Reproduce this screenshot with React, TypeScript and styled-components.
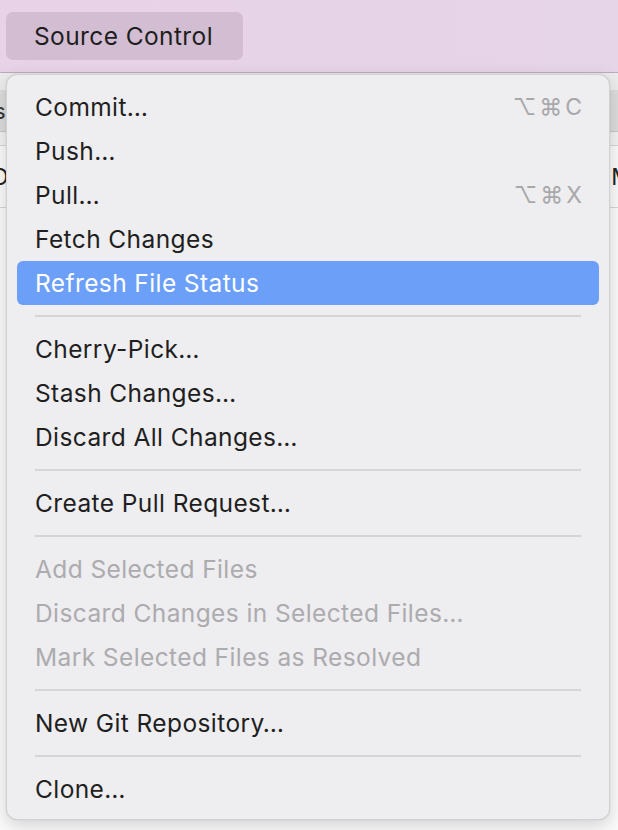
import React from 'react'
import styled, { createGlobalStyle } from 'styled-components'

type Entry =
  | { kind: 'item'; label: string; shortcut?: string; disabled?: boolean; active?: boolean }
  | { kind: 'sep' }

const entries: Entry[] = [
  { kind: 'item', label: 'Commit…', shortcut: '⌥⌘C' },
  { kind: 'item', label: 'Push…' },
  { kind: 'item', label: 'Pull…', shortcut: '⌥⌘X' },
  { kind: 'item', label: 'Fetch Changes' },
  { kind: 'item', label: 'Refresh File Status', active: true },
  { kind: 'sep' },
  { kind: 'item', label: 'Cherry-Pick…' },
  { kind: 'item', label: 'Stash Changes…' },
  { kind: 'item', label: 'Discard All Changes…' },
  { kind: 'sep' },
  { kind: 'item', label: 'Create Pull Request…' },
  { kind: 'sep' },
  { kind: 'item', label: 'Add Selected Files', disabled: true },
  { kind: 'item', label: 'Discard Changes in Selected Files…', disabled: true },
  { kind: 'item', label: 'Mark Selected Files as Resolved', disabled: true },
  { kind: 'sep' },
  { kind: 'item', label: 'New Git Repository…' },
  { kind: 'sep' },
  { kind: 'item', label: 'Clone…' },
]

const App: React.FC = () => {
  return (
    <Page>
      <GlobalStyle />
      <TopBar>
        <BarButton>Source Control</BarButton>
      </TopBar>
      <Window>
        <Toolbar />
        <TabRow>
          <span>s</span>
        </TabRow>
        <Spacer />
        <ListRow>
          <span>D</span>
          <span>M</span>
        </ListRow>
      </Window>

      <Menu>
        {entries.map((entry, index) =>
          entry.kind === 'sep' ? (
            <Separator key={index} />
          ) : (
            <Item key={index} $active={entry.active} $disabled={entry.disabled}>
              <span>{entry.label}</span>
              {entry.shortcut && <Shortcut>{entry.shortcut}</Shortcut>}
            </Item>
          ),
        )}
      </Menu>
    </Page>
  )
}

const GlobalStyle = createGlobalStyle`
  html, body {
    margin: 0;
    padding: 0;
    background: #ffffff;
  }
  * {
    box-sizing: border-box;
  }
`

const Page = styled.div`
  position: relative;
  width: 618px;
  height: 830px;
  overflow: hidden;
  font-family: 'Inter', 'Liberation Sans', sans-serif;
  background: #fbfbfb;
`

const TopBar = styled.div`
  height: 73px;
  padding: 12px 6px 0;
  background: linear-gradient(90deg, #e8d2e8 0%, #e6d4e8 100%);
  border-bottom: 1px solid #b9adb9;
`

const BarButton = styled.div`
  display: inline-flex;
  align-items: center;
  width: 237px;
  height: 48px;
  padding-left: 28px;
  padding-bottom: 1px;
  border-radius: 7px;
  background: #d2bdd2;
  color: #1e1e1e;
  font-size: 24.5px;
  letter-spacing: 0.4px;
`

const Window = styled.div`
  display: flex;
  flex-direction: column;
`

const Toolbar = styled.div`
  height: 17px;
  background: #ececec;
`

const TabRow = styled.div`
  height: 42px;
  background: #dcdcdc;
  border-bottom: 1px solid #c8c8c8;
  display: flex;
  align-items: center;
  color: #333;
  font-size: 22px;
  span {
    margin-left: -6px;
  }
`

const Spacer = styled.div`
  height: 14px;
  background: #f2f2f2;
  border-bottom: 1px solid #d6d6d6;
`

const ListRow = styled.div`
  height: 62px;
  display: flex;
  align-items: center;
  justify-content: space-between;
  border-bottom: 1px solid #d6d6d6;
  background: #fafafa;
  color: #222;
  font-size: 23px;
  span:first-child {
    margin-left: -8px;
  }
  span:last-child {
    margin-right: -14px;
  }
`

const Menu = styled.div`
  position: absolute;
  top: 74px;
  left: 6px;
  width: 604px;
  padding: 10px 10px 8px;
  display: flex;
  flex-direction: column;
  background: #eeedf0;
  border-radius: 11px;
  border: 1px solid rgba(0, 0, 0, 0.12);
  box-shadow: 0 6px 18px rgba(0, 0, 0, 0.16), 0 0 2px rgba(0, 0, 0, 0.08);
`

const Item = styled.div<{ $active?: boolean; $disabled?: boolean }>`
  height: 44px;
  display: flex;
  align-items: center;
  justify-content: space-between;
  padding: 0 17px 0 18px;
  border-radius: 6px;
  font-size: 24.5px;
  letter-spacing: 0.4px;
  background: ${(p) => (p.$active ? '#6b9ff8' : 'transparent')};
  color: ${(p) => (p.$active ? '#ffffff' : p.$disabled ? '#acabae' : '#1f1f1f')};
`

const Shortcut = styled.span`
  color: #a8a8aa;
  font-size: 23px;
  letter-spacing: 3px;
  margin-right: -3px;
`

const Separator = styled.div`
  height: 22px;
  display: flex;
  align-items: center;
  padding: 0 18px;
  &::before {
    content: '';
    flex: 1;
    height: 2px;
    background: #d5d4d7;
  }
`

export default App
